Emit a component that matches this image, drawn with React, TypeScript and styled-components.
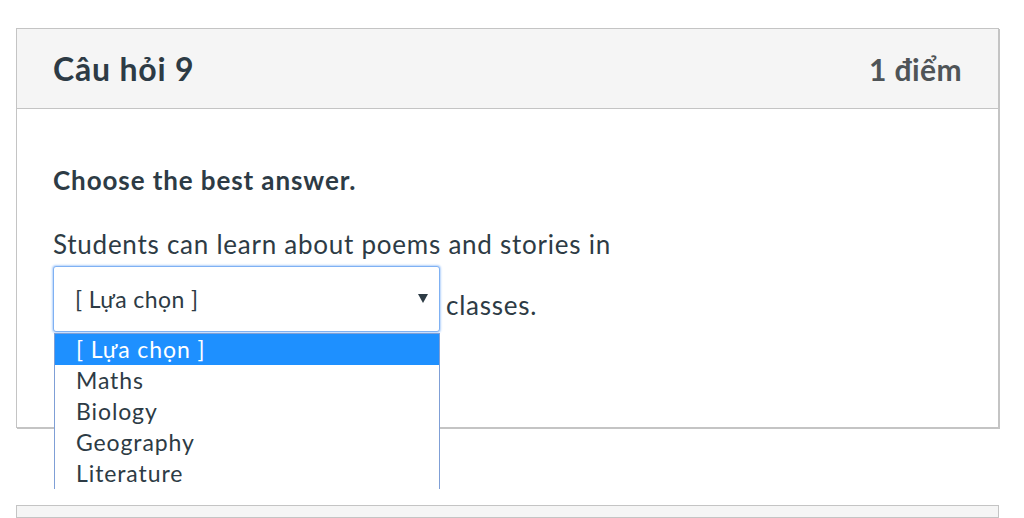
import React from "react";
import styled, { createGlobalStyle } from "styled-components";

const GlobalStyle = createGlobalStyle`
  html, body {
    margin: 0;
    padding: 0;
    background: #ffffff;
    font-family: Lato, "Noto Sans", sans-serif;
    color: #2d3b45;
    overflow: hidden;
  }
`;

const Page = styled.div`
  width: 1024px;
  height: 518px;
  padding: 28px 0 0 16px;
  box-sizing: border-box;
  display: flex;
  flex-direction: column;
  gap: 77px;
`;

const Card = styled.section`
  width: 983px;
  box-sizing: border-box;
  border: 1px solid #c4c4c4;
  box-shadow: 1px 1px 0 #c4c4c4;
  background: #ffffff;
`;

const CardHeader = styled.header`
  height: 79px;
  background: #f5f5f5;
  border-bottom: 1px solid #c4c4c4;
  display: flex;
  align-items: center;
  justify-content: space-between;
  padding: 0 36px;
`;

const Title = styled.h2`
  margin: 0;
  font-size: 32px;
  letter-spacing: 0.8px;
  font-weight: 700;
  color: #2d3b45;
`;

const Points = styled.span`
  font-size: 30px;
  letter-spacing: 0.4px;
  font-weight: 700;
  color: #4f5457;
`;

const CardBody = styled.div`
  padding: 56px 36px 0;
  height: 318px;
  box-sizing: border-box;
`;

const Instruction = styled.p`
  margin: 0 0 34px;
  font-size: 26px;
  letter-spacing: 0.9px;
  font-weight: 700;
  line-height: 30px;
`;

const Question = styled.p`
  margin: 0;
  font-size: 26px;
  letter-spacing: 0.75px;
  line-height: 30px;
  width: 700px;
`;

const SelectWrap = styled.span`
  position: relative;
  display: inline-block;
  vertical-align: 7px;
  margin: 7px 6px 0 0;
  letter-spacing: 0;
`;

const SelectBox = styled.span`
  display: flex;
  align-items: center;
  justify-content: space-between;
  width: 387px;
  height: 66px;
  box-sizing: border-box;
  padding: 0 11px 0 21px;
  border: 1px solid #7fb1f3;
  border-radius: 3px;
  box-shadow: 0 0 2px 1px #b5d3fb;
  background: #ffffff;
  font-size: 23px;
  letter-spacing: 0.4px;
  color: #2d3b45;
`;

const Caret = styled.span`
  width: 0;
  height: 0;
  border-left: 5px solid transparent;
  border-right: 5px solid transparent;
  border-top: 9px solid #2d3b45;
  margin-top: -1px;
`;

const OptionList = styled.ul`
  position: absolute;
  left: 1px;
  top: 67px;
  width: 386px;
  box-sizing: border-box;
  margin: 0;
  padding: 0;
  list-style: none;
  background: #ffffff;
  border: 1px solid #7f9fd6;
  border-bottom: none;
`;

const OptionItem = styled.li<{ $active?: boolean }>`
  height: 31px;
  line-height: 31px;
  padding-left: 21px;
  font-size: 23px;
  letter-spacing: 0.9px;
  background: ${(p) => (p.$active ? "#1e90ff" : "#ffffff")};
  color: ${(p) => (p.$active ? "#ffffff" : "#2d3b45")};
`;

const options = ["[ Lựa chọn ]", "Maths", "Biology", "Geography", "Literature"];

const NextCard = styled.section`
  width: 983px;
  height: 40px;
  box-sizing: border-box;
  border: 1px solid #c4c4c4;
  background: #f5f5f5;
`;

export default function App() {
  return (
    <>
      <GlobalStyle />
      <Page>
        <Card>
          <CardHeader>
            <Title>Câu hỏi 9</Title>
            <Points>1 điểm</Points>
          </CardHeader>
          <CardBody>
            <Instruction>Choose the best answer.</Instruction>
            <Question>
              Students can learn about poems and stories in{" "}
              <SelectWrap>
                <SelectBox>
                  <span>[ Lựa chọn ]</span>
                  <Caret />
                </SelectBox>
                <OptionList>
                  {options.map((o, i) => (
                    <OptionItem key={o} $active={i === 0}>
                      {o}
                    </OptionItem>
                  ))}
                </OptionList>
              </SelectWrap>
              classes.
            </Question>
          </CardBody>
        </Card>
        <NextCard />
      </Page>
    </>
  );
}
